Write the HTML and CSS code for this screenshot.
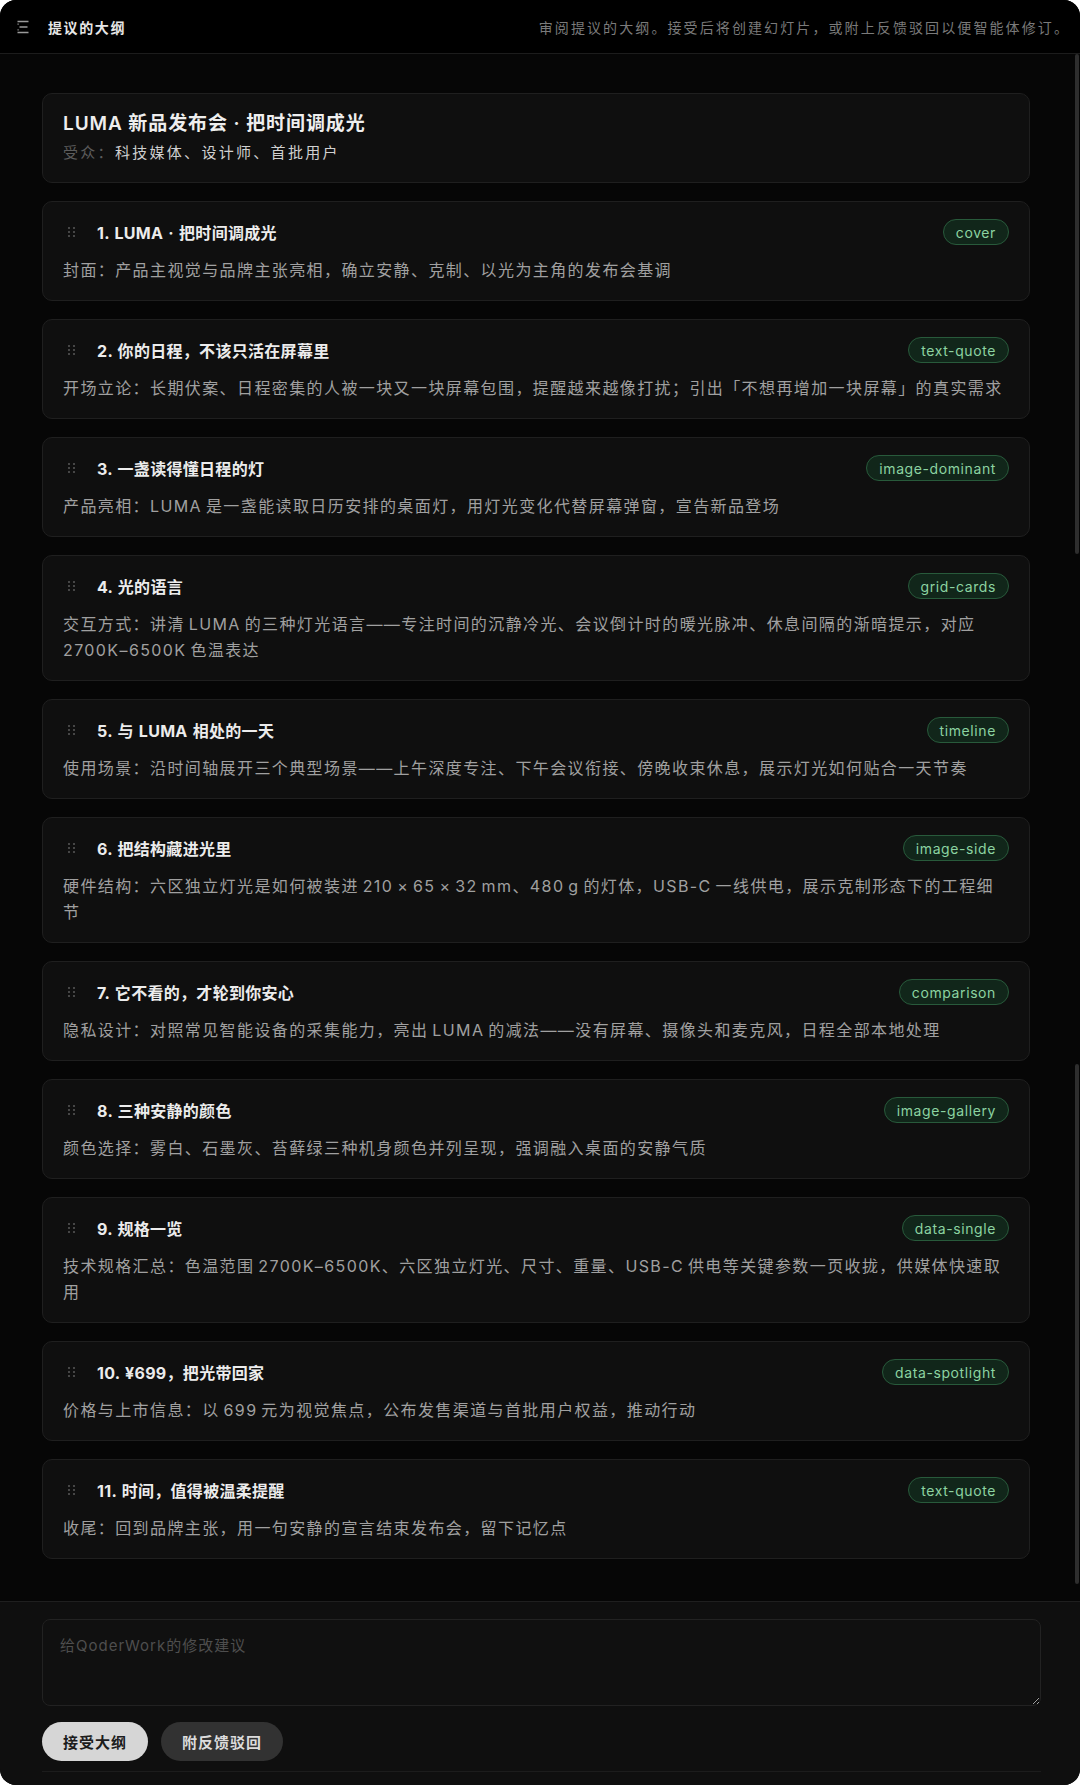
FILE: index.html
```html
<!DOCTYPE html>
<html lang="zh-CN">
  <head>
    <meta charset="UTF-8" />
    <meta name="viewport" content="width=device-width, initial-scale=1.0" />
    <title>提议的大纲</title>
    <link rel="stylesheet" href="styles.css">
  </head>
  <body>
    <div class="panel">
      <header class="topbar">
        <div class="topbar-left">
          <svg class="menu-icon" width="12" height="14" viewBox="0 0 12 14">
            <path d="M0.5 1.5h11M2.5 7h8M0.5 12.5h11" stroke="#9a9a9a" stroke-width="1.4" fill="none" />
            <path d="M0.5 4.2h1.2M0.5 9.8h1.2" stroke="#9a9a9a" stroke-width="1.2" fill="none" />
          </svg>
          <span class="topbar-title">提议的大纲</span>
        </div>
        <span class="topbar-hint">审阅提议的大纲。接受后将创建幻灯片，或附上反馈驳回以便智能体修订。</span>
      </header>

      <main class="outline">
        <div class="summary">
          <div class="summary-title">LUMA 新品发布会 · 把时间调成光</div>
          <div class="summary-sub"><span class="muted">受众：</span>科技媒体、设计师、首批用户</div>
        </div>

        <div class="slide">
          <div class="slide-head">
            <span class="handle"><i></i><i></i><i></i><i></i><i></i><i></i></span>
            <span class="slide-title">1. LUMA · 把时间调成光</span>
            <span class="badge">cover</span>
          </div>
          <p class="slide-desc">封面：产品主视觉与品牌主张亮相，确立安静、克制、以光为主角的发布会基调</p>
        </div>

        <div class="slide">
          <div class="slide-head">
            <span class="handle"><i></i><i></i><i></i><i></i><i></i><i></i></span>
            <span class="slide-title">2. 你的日程，不该只活在屏幕里</span>
            <span class="badge">text-quote</span>
          </div>
          <p class="slide-desc">开场立论：长期伏案、日程密集的人被一块又一块屏幕包围，提醒越来越像打扰；引出「不想再增加一块屏幕」的真实需求</p>
        </div>

        <div class="slide">
          <div class="slide-head">
            <span class="handle"><i></i><i></i><i></i><i></i><i></i><i></i></span>
            <span class="slide-title">3. 一盏读得懂日程的灯</span>
            <span class="badge">image-dominant</span>
          </div>
          <p class="slide-desc">产品亮相：LUMA 是一盏能读取日历安排的桌面灯，用灯光变化代替屏幕弹窗，宣告新品登场</p>
        </div>

        <div class="slide">
          <div class="slide-head">
            <span class="handle"><i></i><i></i><i></i><i></i><i></i><i></i></span>
            <span class="slide-title">4. 光的语言</span>
            <span class="badge">grid-cards</span>
          </div>
          <p class="slide-desc">交互方式：讲清 LUMA 的三种灯光语言——专注时间的沉静冷光、会议倒计时的暖光脉冲、休息间隔的渐暗提示，对应 2700K–6500K 色温表达</p>
        </div>

        <div class="slide">
          <div class="slide-head">
            <span class="handle"><i></i><i></i><i></i><i></i><i></i><i></i></span>
            <span class="slide-title">5. 与 LUMA 相处的一天</span>
            <span class="badge">timeline</span>
          </div>
          <p class="slide-desc">使用场景：沿时间轴展开三个典型场景——上午深度专注、下午会议衔接、傍晚收束休息，展示灯光如何贴合一天节奏</p>
        </div>

        <div class="slide">
          <div class="slide-head">
            <span class="handle"><i></i><i></i><i></i><i></i><i></i><i></i></span>
            <span class="slide-title">6. 把结构藏进光里</span>
            <span class="badge">image-side</span>
          </div>
          <p class="slide-desc">硬件结构：六区独立灯光是如何被装进 210 × 65 × 32 mm、480 g 的灯体，USB-C 一线供电，展示克制形态下的工程细节</p>
        </div>

        <div class="slide">
          <div class="slide-head">
            <span class="handle"><i></i><i></i><i></i><i></i><i></i><i></i></span>
            <span class="slide-title">7. 它不看的，才轮到你安心</span>
            <span class="badge">comparison</span>
          </div>
          <p class="slide-desc">隐私设计：对照常见智能设备的采集能力，亮出 LUMA 的减法——没有屏幕、摄像头和麦克风，日程全部本地处理</p>
        </div>

        <div class="slide">
          <div class="slide-head">
            <span class="handle"><i></i><i></i><i></i><i></i><i></i><i></i></span>
            <span class="slide-title">8. 三种安静的颜色</span>
            <span class="badge">image-gallery</span>
          </div>
          <p class="slide-desc">颜色选择：雾白、石墨灰、苔藓绿三种机身颜色并列呈现，强调融入桌面的安静气质</p>
        </div>

        <div class="slide">
          <div class="slide-head">
            <span class="handle"><i></i><i></i><i></i><i></i><i></i><i></i></span>
            <span class="slide-title">9. 规格一览</span>
            <span class="badge">data-single</span>
          </div>
          <p class="slide-desc">技术规格汇总：色温范围 2700K–6500K、六区独立灯光、尺寸、重量、USB-C 供电等关键参数一页收拢，供媒体快速取用</p>
        </div>

        <div class="slide">
          <div class="slide-head">
            <span class="handle"><i></i><i></i><i></i><i></i><i></i><i></i></span>
            <span class="slide-title">10. ¥699，把光带回家</span>
            <span class="badge">data-spotlight</span>
          </div>
          <p class="slide-desc">价格与上市信息：以 699 元为视觉焦点，公布发售渠道与首批用户权益，推动行动</p>
        </div>

        <div class="slide">
          <div class="slide-head">
            <span class="handle"><i></i><i></i><i></i><i></i><i></i><i></i></span>
            <span class="slide-title">11. 时间，值得被温柔提醒</span>
            <span class="badge">text-quote</span>
          </div>
          <p class="slide-desc">收尾：回到品牌主张，用一句安静的宣言结束发布会，留下记忆点</p>
        </div>

        <div class="scroll-thumb thumb-a"></div>
        <div class="scroll-thumb thumb-b"></div>
      </main>

      <footer class="composer">
        <div class="composer-inner">
          <textarea class="feedback" placeholder="给QoderWork的修改建议"></textarea>
          <div class="actions">
            <button class="btn btn-accept">接受大纲</button>
            <button class="btn btn-reject">附反馈驳回</button>
          </div>
        </div>
      </footer>
    </div>
  </body>
</html>
```

FILE: styles.css
```css
* {
  box-sizing: border-box;
}
body {
  margin: 0;
  background-color: #ffffff;
  font-family: "Inter", "Noto Sans CJK SC", sans-serif;
}
.panel {
  width: 1080px;
  height: 1785px;
  background-color: #060606;
  border-radius: 16px;
  overflow: hidden;
  display: flex;
  flex-direction: column;
}

/* top bar */
.topbar {
  height: 54px;
  flex-shrink: 0;
  background-color: #000;
  border-bottom: 1px solid #1c1c1c;
  display: flex;
  align-items: center;
  justify-content: space-between;
  padding: 0 10px 0 17px;
}
.topbar-left {
  display: flex;
  align-items: center;
  gap: 19px;
}
.menu-icon {
  display: block;
}
.topbar-title {
  font-size: 14px;
  font-weight: 700;
  letter-spacing: 1.6px;
  color: #e6e6e6;
}
.topbar-hint {
  font-size: 14px;
  letter-spacing: 2.1px;
  color: #7a7a7a;
}

/* outline list */
.outline {
  position: relative;
  flex: 1;
  padding: 39px 50px 0 42px;
  display: flex;
  flex-direction: column;
  gap: 18px;
}
.summary,
.slide {
  background-color: #0f0f0f;
  border: 1px solid #1f1f1f;
  border-radius: 10px;
}
.summary {
  padding: 17px 20px;
}
.summary-title {
  font-size: 19px;
  font-weight: 600;
  line-height: 26px;
  letter-spacing: 0.9px;
  color: #eeeeee;
}
.summary-sub {
  margin-top: 4px;
  font-size: 15px;
  line-height: 24px;
  letter-spacing: 2.3px;
  color: #d0d0d0;
}
.muted {
  color: #5c5c5c;
}
.slide {
  padding: 17px 20px;
}
.slide-head {
  display: flex;
  align-items: center;
  height: 26px;
}
.handle {
  display: grid;
  grid-template-columns: 3px 3px;
  gap: 2px 2px;
  margin: 0 21px 0 5px;
}
.handle i {
  width: 2px;
  height: 2px;
  background-color: #5a5a5a;
  border-radius: 1px;
}
.slide-title {
  flex: 1;
  font-size: 16px;
  font-weight: 700;
  letter-spacing: 0.3px;
  word-spacing: 1px;
  color: #ececec;
}
.badge {
  height: 26px;
  padding: 0 12px;
  display: flex;
  align-items: center;
  border-radius: 13px;
  background-color: #11261a;
  border: 1px solid #285a3b;
  color: #8cd3a1;
  font-size: 14px;
  letter-spacing: 0.6px;
}
.slide-desc {
  margin: 12px 0 0;
  font-size: 16px;
  line-height: 26px;
  letter-spacing: 1.4px;
  word-spacing: -2px;
  color: #a0a0a0;
}

/* fake overlay scrollbar */
.scroll-thumb {
  position: absolute;
  right: 1px;
  width: 4px;
  border-radius: 2px;
  background-color: #2e2e2e;
}
.thumb-a {
  top: 0;
  height: 500px;
}
.thumb-b {
  top: 1010px;
  height: 520px;
}

/* composer */
.composer {
  flex-shrink: 0;
  background-color: #0f0f0f;
  border-top: 1px solid #1f1f1f;
  padding: 17px 39px 13px 42px;
}
.composer-inner {
  padding-bottom: 10px;
  border-bottom: 1px solid #1c1c1c;
}
.feedback {
  display: block;
  width: 100%;
  height: 87px;
  padding: 14px 17px;
  background-color: #101010;
  border: 1px solid #222;
  border-radius: 8px;
  color: #ddd;
  font-family: "Inter", "Noto Sans CJK SC", sans-serif;
  font-size: 15px;
  letter-spacing: 1px;
  outline: none;
}
.feedback::placeholder {
  color: #4e4e4e;
}
.actions {
  display: flex;
  gap: 13px;
  margin-top: 16px;
}
.btn {
  height: 39px;
  padding: 0 21px;
  border: none;
  border-radius: 20px;
  font-family: "Inter", "Noto Sans CJK SC", sans-serif;
  font-size: 15px;
  font-weight: 700;
  letter-spacing: 1px;
  cursor: pointer;
}
.btn-accept {
  background-color: #d6d6d6;
  color: #1c1c1c;
}
.btn-reject {
  background-color: #323232;
  color: #dcdcdc;
}
```
